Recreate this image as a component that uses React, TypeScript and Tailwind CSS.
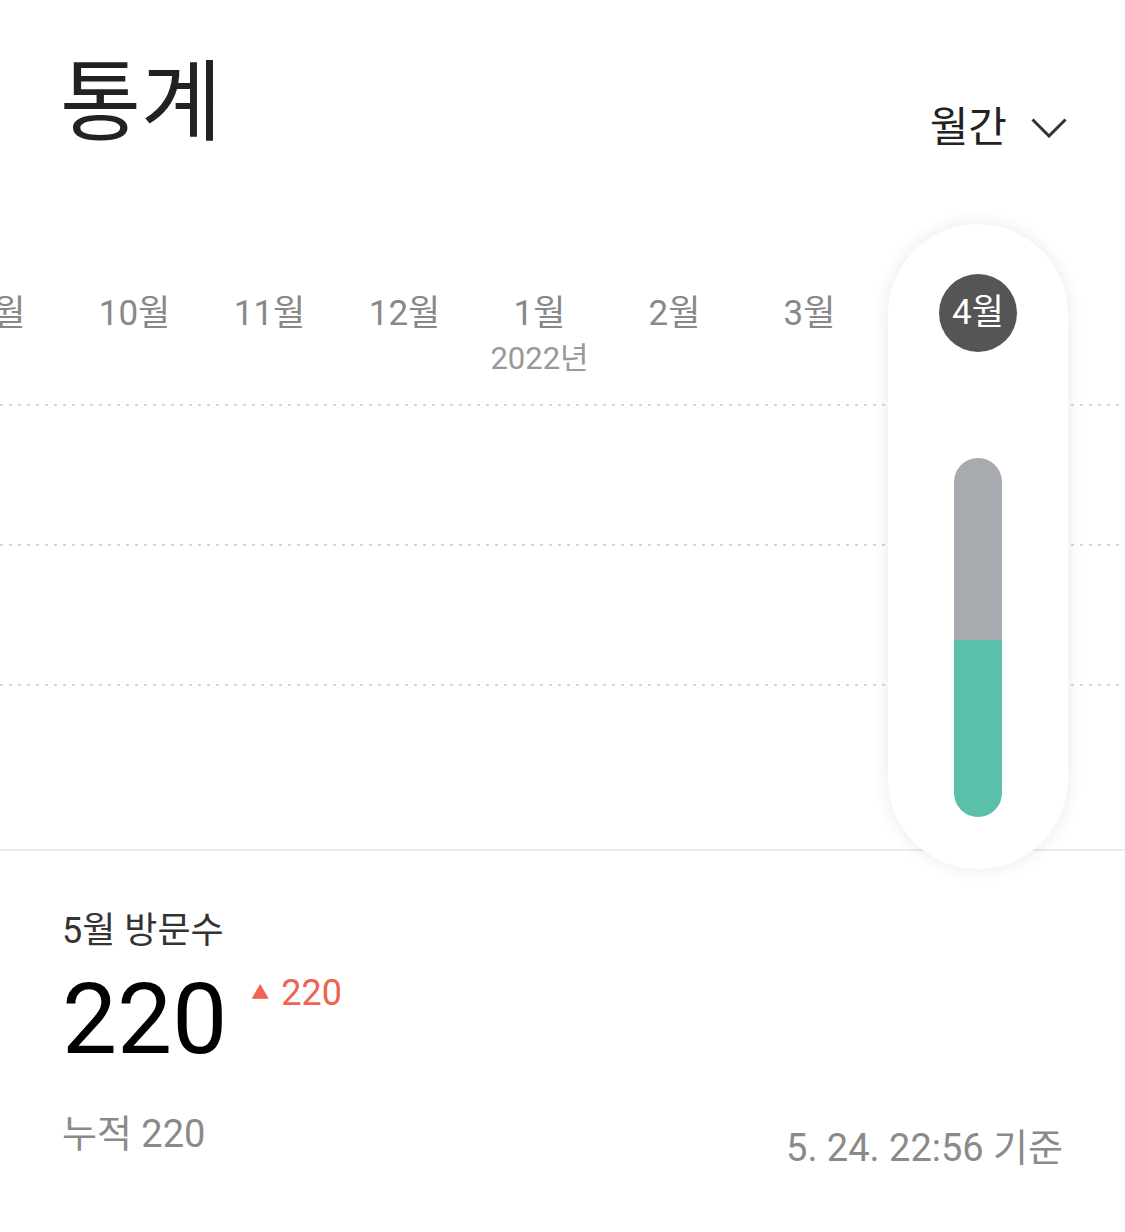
const months = ['9월', '10월', '11월', '12월', '1월', '2월', '3월'];

const font = { fontFamily: 'Roboto, "Noto Sans CJK KR", sans-serif' };

const GridLine = () => (
  <div className="h-[2px] w-full bg-[linear-gradient(to_right,#d6d6d6_3px,transparent_3px)] bg-[length:9px_2px]" />
);

const MonthColumn = ({ label, year }: { label: string; year?: string }) => (
  <div className="flex w-[135px] shrink-0 flex-col items-center pt-[72px]">
    <span className="text-[35px] leading-none text-[#888888]">{label}</span>
    {year && <span className="mt-[12px] text-[31px] leading-none text-[#999999]">{year}</span>}
  </div>
);

const SelectedColumn = () => {
  const prev = 182;
  const curr = 177;

  return (
    <div className="relative z-10 ml-[11px] flex h-[645px] w-[180px] shrink-0 flex-col items-center rounded-full bg-white pt-[50px] shadow-[0_0_18px_rgba(0,0,0,0.09)]">
      <div className="flex h-[78px] w-[78px] items-center justify-center rounded-full bg-[#555555] text-[35px] leading-none text-white">
        4월
      </div>
      <div className="mt-[106px] flex w-[48px] flex-col overflow-hidden rounded-full">
        <div className="bg-[#a7aaae]" style={{ height: prev }} />
        <div className="bg-[#5bc0a9]" style={{ height: curr }} />
      </div>
    </div>
  );
};

export default function App() {
  return (
    <div className="min-h-[1232px] w-[1125px] overflow-hidden bg-white" style={font}>
      <header className="flex items-start justify-between pl-[60px] pr-[58px] pt-[50px]">
        <h1 className="text-[88px] font-normal leading-[1.2] text-[#222222]">통계</h1>
        <button className="mt-[57px] flex items-center gap-[24px] text-[42px] leading-none text-[#222222]">
          월간
          <svg width="36" height="20" viewBox="0 0 36 20" fill="none" stroke="#333333" strokeWidth="3">
            <polyline points="1.5,1.5 18,18 34.5,1.5" />
          </svg>
        </button>
      </header>

      <section className="mt-[68px] grid h-[627px] border-b-2 border-[#ebebeb]">
        <div className="col-start-1 row-start-1 flex flex-col gap-[138px] pt-[180px]">
          <GridLine />
          <GridLine />
          <GridLine />
        </div>
        <div className="col-start-1 row-start-1 -ml-[68px] flex items-start">
          {months.map((m) => (
            <MonthColumn key={m} label={m} year={m === '1월' ? '2022년' : undefined} />
          ))}
          <SelectedColumn />
        </div>
      </section>

      <section className="px-[62px] pt-[62px]">
        <div className="text-[36px] font-normal leading-none text-[#333333]">5월 방문수</div>
        <div className="mt-[22px] flex items-start">
          <span className="text-[98px] leading-none text-black">220</span>
          <span className="ml-[24px] mt-[4px] flex items-center gap-[12px] text-[36px] leading-none text-[#ee6352]">
            <span className="text-[18px]">▲</span>
            220
          </span>
        </div>
        <div className="mt-[46px] flex items-end justify-between">
          <span className="text-[38px] leading-none text-[#8a8a8a]">누적 220</span>
          <span className="-mb-[14px] text-[38px] leading-none text-[#8a8a8a]">5. 24. 22:56 기준</span>
        </div>
      </section>
    </div>
  );
}
